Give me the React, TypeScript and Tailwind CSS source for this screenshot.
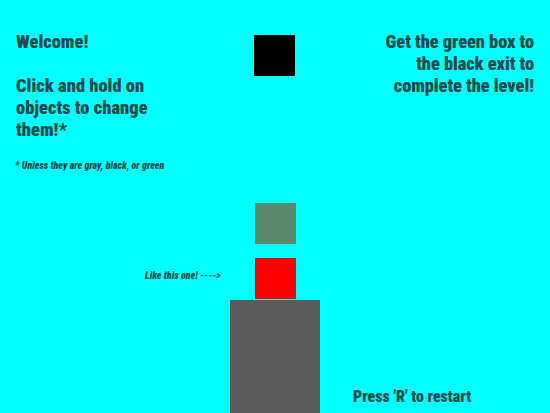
export default function App() {
  const font = { fontFamily: 'Impact, Roboto, "DejaVu Sans Condensed", sans-serif' }

  return (
    <div
      className="relative h-[413px] w-[550px] overflow-hidden bg-[#00ffff] text-[#1d4b4b] [font-stretch:condensed]"
      style={font}
    >
      {/* Instruction text */}
      <div className="flex items-start justify-between px-4 pt-[31px] font-black">
        <div className="w-[160px] text-[18.5px] leading-[22px]">
          <p>Welcome!</p>
          <p className="mt-[22px]">
            Click and hold on
            <br />
            objects to change
            <br />
            them!*
          </p>
          <p className="-ml-px mt-[19px] whitespace-nowrap text-[10px] italic leading-[12px]">
            * Unless they are gray, black, or green
          </p>
        </div>
        <p className="text-right text-[18.5px] leading-[22px] tracking-[-0.1px]">
          Get the green box to
          <br />
          the black exit to
          <br />
          complete the level!
        </p>
      </div>

      {/* Level objects */}
      <div className="absolute left-[254px] top-[35px] h-[41px] w-[41px] bg-black" />
      <div className="absolute left-[255px] top-[203px] h-[41px] w-[41px] bg-[#5a8a6a]" />
      <div className="absolute left-[255px] top-[258px] h-[41px] w-[41px] bg-[#ff0000]" />
      <div className="absolute left-[230px] top-[300px] h-[113px] w-[90px] bg-[#5a5a5a]" />

      <p className="absolute left-[145px] top-[270px] text-[10px] font-black italic leading-[12px]">
        Like this one! ----&gt;
      </p>
      <p className="absolute left-[353px] top-[387px] text-[16px] font-black leading-[20px]">
        Press 'R' to restart
      </p>
    </div>
  )
}
